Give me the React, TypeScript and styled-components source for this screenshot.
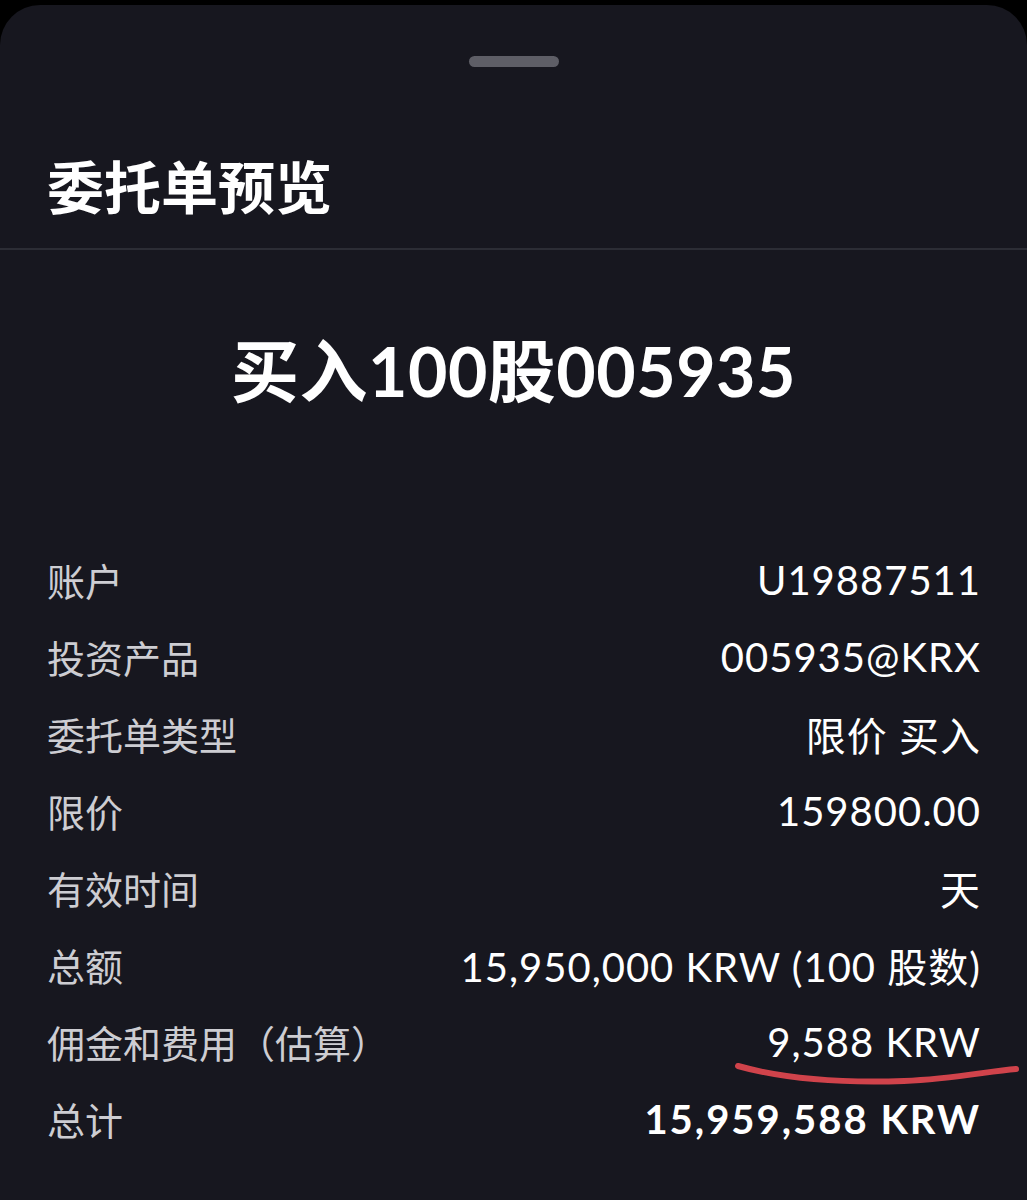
import styled, { createGlobalStyle } from "styled-components";

const GlobalStyle = createGlobalStyle`
  html, body {
    margin: 0;
    padding: 0;
    background: #000;
  }
  * {
    box-sizing: border-box;
  }
`;

const rows: { label: string; value: string; strong?: boolean; marked?: boolean }[] = [
  { label: "账户", value: "U19887511" },
  { label: "投资产品", value: "005935@KRX" },
  { label: "委托单类型", value: "限价 买入" },
  { label: "限价", value: "159800.00" },
  { label: "有效时间", value: "天" },
  { label: "总额", value: "15,950,000 KRW (100 股数)" },
  { label: "佣金和费用（估算）", value: "9,588 KRW", marked: true },
  { label: "总计", value: "15,959,588 KRW", strong: true },
];

function Underline() {
  return (
    <Mark viewBox="0 0 286 26" width="286" height="26">
      <path
        d="M4 5 C 50 18, 110 22, 170 20 C 220 18, 255 10, 282 8"
        fill="none"
        stroke="#d0434b"
        strokeWidth="6"
        strokeLinecap="round"
      />
    </Mark>
  );
}

function App() {
  return (
    <>
      <GlobalStyle />
      <Sheet>
        <Header>
          <Handle />
          <Title>委托单预览</Title>
        </Header>
        <Divider />
        <Headline>买入100股005935</Headline>
        <List>
          {rows.map((r) => (
            <Row key={r.label}>
              <Label>{r.label}</Label>
              <Value $strong={r.strong}>{r.value}</Value>
              {r.marked && <Underline />}
            </Row>
          ))}
        </List>
      </Sheet>
    </>
  );
}

const Sheet = styled.div`
  margin-top: 5px;
  min-height: 1195px;
  background: #17171f;
  border-radius: 40px 40px 0 0;
  display: flex;
  flex-direction: column;
  font-family: Lato, "Noto Sans CJK SC", sans-serif;
  color: #fff;
`;

const Header = styled.div`
  display: flex;
  flex-direction: column;
  padding: 51px 47px 36px;
`;

const Handle = styled.div`
  align-self: center;
  width: 90px;
  height: 11px;
  border-radius: 6px;
  background: #5e5e66;
`;

const Title = styled.h1`
  margin: 89px 0 0;
  font-family: "Noto Sans CJK SC", sans-serif;
  font-size: 57px;
  line-height: 56px;
  font-weight: 700;
  color: #fff;
`;

const Divider = styled.div`
  height: 2px;
  background: #2c2d35;
`;

const Headline = styled.div`
  margin-top: 87px;
  text-align: center;
  font-size: 68px;
  line-height: 68px;
  font-weight: 700;
  letter-spacing: 0.5px;
  font-family: Lato, "Noto Sans CJK SC", sans-serif;
`;

const List = styled.div`
  margin-top: 136px;
  padding: 0 46px 0 47px;
  display: flex;
  flex-direction: column;
`;

const Row = styled.div`
  position: relative;
  height: 77px;
  display: flex;
  align-items: center;
  justify-content: space-between;
`;

const Label = styled.span`
  font-family: "Noto Sans CJK SC", sans-serif;
  font-size: 38px;
  color: #cdcdd2;
`;

const Value = styled.span<{ $strong?: boolean }>`
  font-size: 40px;
  font-weight: ${({ $strong }) => ($strong ? 700 : 400)};
  letter-spacing: ${({ $strong }) => ($strong ? "2px" : "1px")};
  color: #fff;
`;

const Mark = styled.svg`
  position: absolute;
  top: 58px;
  right: -39px;
`;

export default App;
